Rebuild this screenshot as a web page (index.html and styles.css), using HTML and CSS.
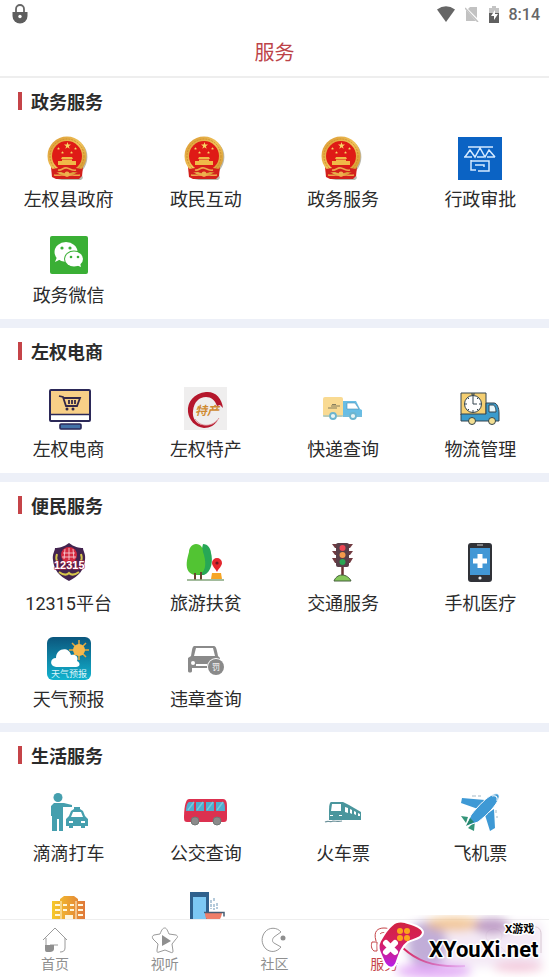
FILE: index.html
```html
<!DOCTYPE html>
<html lang="zh-CN">
<head>
    <meta charset="UTF-8">
    <meta name="viewport" content="width=device-width, initial-scale=1.0">
    <title>服务</title>
    <link rel="stylesheet" href="styles.css">
</head>
<body>
    <svg class="defs" width="0" height="0">
        <defs>
            <linearGradient id="gold" x1="0" y1="0" x2="1" y2="1">
                <stop offset="0" stop-color="#d9962f"/><stop offset=".5" stop-color="#f0c35a"/><stop offset="1" stop-color="#cf8f27"/>
            </linearGradient>
            <linearGradient id="sky" x1="0" y1="0" x2="0" y2="1">
                <stop offset="0" stop-color="#0b567d"/><stop offset="1" stop-color="#12b3cf"/>
            </linearGradient>
            <linearGradient id="hotel" x1="0" y1="0" x2="1" y2="0">
                <stop offset="0" stop-color="#f6c92c"/><stop offset="1" stop-color="#e0793a"/>
            </linearGradient>
            <linearGradient id="pad" x1="0" y1="0" x2="0" y2="1">
                <stop offset="0" stop-color="#cf2340"/><stop offset=".45" stop-color="#d81f5c"/><stop offset="1" stop-color="#b61ff0"/>
            </linearGradient>
            <linearGradient id="cord" x1="0" y1="0" x2="1" y2="0">
                <stop offset="0" stop-color="#d82258"/><stop offset="1" stop-color="#d66be0" stop-opacity=".3"/>
            </linearGradient>
            <filter id="soft" x="-30%" y="-60%" width="160%" height="220%"><feGaussianBlur stdDeviation="5"/></filter>
        </defs>
        <symbol id="star" viewBox="0 0 10 10"><path d="M5 0l1.2 3.7H10L6.9 6l1.2 3.8L5 7.5 1.9 9.8 3.1 6 0 3.7h3.8z"/></symbol>
        <symbol id="emblem" viewBox="0 0 44 44">
            <path d="M26 3c11 3 16 12 14 22-1 5-4 9-6 11l2 6-2 2H10l24-5z" fill="#8d8a78" opacity=".6"/>
            <path d="M4 31h32l-1 9-3 3H9l-4-2z" fill="#d3201c"/>
            <circle cx="20" cy="20" r="19.500" fill="url(#gold)"/>
            <circle cx="20" cy="20" r="17" fill="none" stroke="#c68424" stroke-width=".7" stroke-dasharray="2 1"/>
            <circle cx="20" cy="20" r="15" fill="#df1a16"/>
            <g fill="#f8d564">
                <use href="#star" x="17" y="6" width="7" height="7"/>
                <use href="#star" x="10" y="11" width="3" height="3"/>
                <use href="#star" x="14" y="15" width="3" height="3"/>
                <use href="#star" x="23" y="15" width="3" height="3"/>
                <use href="#star" x="27" y="11" width="3" height="3"/>
            </g>
            <path d="M15 21h10l1 2H14zM15 23.500h10V25h4v4H11v-4h4z" fill="#f0b948"/>
            <path d="M5 33l6-1c3 0 5-3 9-3s6 3 9 3l6 1-1 4-8-1-6 2-6-2-8 1z" fill="#d3201c"/>
            <path d="M11 34c4 1 5-3 9-2s5 3 9 2M7 39c4 1 9-1 13 1 4-2 9 0 13-1" fill="none" stroke="#efa84a" stroke-width="1.500"/>
            <circle cx="20" cy="38" r="2.500" fill="#efb04e"/>
        </symbol>
    </svg>

    <div class="app">
        <div class="status">
            <svg class="status-lock" width="16" height="20" viewBox="0 0 16 20">
                <path d="M4 9V5a4 4 0 0 1 8 0v4" fill="none" stroke="#666" stroke-width="1.800"/>
                <path d="M.5 8h15v4a7.500 7.500 0 0 1-15 0z" fill="#5e5e5e"/>
                <circle cx="8" cy="12.500" r="1.700" fill="#fff"/>
            </svg>
            <svg width="18" height="16" viewBox="0 0 18 16"><path d="M0 3.500Q9-3 18 3.500L9 16z" fill="#666"/></svg>
            <svg width="14" height="16" viewBox="0 0 14 16">
                <path d="M5 1h7v11L3 3zM1 4l10 11H1z" fill="#c2c2c2"/><path d="M0 2l13 14" stroke="#c2c2c2" stroke-width="1.500"/>
            </svg>
            <svg width="10" height="17" viewBox="0 0 10 17">
                <path d="M3 0h4v2h3v6H0V2h3z" fill="#c4c4c4"/><path d="M0 7h10v10H0z" fill="#606060"/><path d="M6 4L2 10h3v4l4-6H6z" fill="#fff"/>
            </svg>
            <span>8:14</span>
        </div>
        <header class="title"><h1>服务</h1></header>

        <main class="content">
            <section class="group">
                <h2>政务服务</h2>
                <div class="grid">
                    <a class="item" href="#"><svg class="icon"><use href="#emblem"/></svg>左权县政府</a>
                    <a class="item" href="#"><svg class="icon"><use href="#emblem"/></svg>政民互动</a>
                    <a class="item" href="#"><svg class="icon"><use href="#emblem"/></svg>政务服务</a>
                    <a class="item" href="#">
                        <svg class="icon" viewBox="0 0 44 44">
                            <path d="M0 1h44v43H0z" fill="#0b63c4"/>
                            <path d="M10 11h25M7 21l5-7 5 7 5-9 5 9 4-7 6 7M6 21h8M19 21h7M29 21h8M13 25h18v10H20M13 24v10h5M17 29h9v2" fill="none" stroke="#d5eaff" stroke-width="1.500"/>
                        </svg>行政审批</a>
                    <a class="item" href="#">
                        <svg class="icon" viewBox="0 0 44 44">
                            <rect x="3" y="4" width="38" height="38" rx="2" fill="#3aaf35"/>
                            <path d="M10 25l-2 5 6-3z" fill="#fff"/><ellipse cx="19" cy="20" rx="11.500" ry="10" fill="#fff"/>
                            <ellipse cx="27" cy="27" rx="10" ry="8.500" fill="#3aaf35"/>
                            <ellipse cx="27" cy="27" rx="9" ry="7.500" fill="#fff"/><path d="M29 33l5 2-1-4z" fill="#fff"/>
                            <g fill="#3aaf35"><circle cx="15" cy="16" r="1.600"/><circle cx="23" cy="16" r="1.600"/><circle cx="24" cy="25" r="1.300"/><circle cx="31" cy="25" r="1.300"/></g>
                        </svg>政务微信</a>
                </div>
            </section>

            <section class="group">
                <h2>左权电商</h2>
                <div class="grid">
                    <a class="item" href="#">
                        <svg class="icon" viewBox="0 0 44 44">
                            <rect x="3" y="4" width="40" height="31" rx="1" fill="#fff" stroke="#2b2858" stroke-width="2"/>
                            <path d="M4 5h38v23H4z" fill="#f8cf87"/><path d="M3 28.500h40" stroke="#2b2858" stroke-width="1.500"/>
                            <rect x="13" y="38" width="21" height="5" rx="1" fill="#4472a8" stroke="#2b2858" stroke-width="1.600"/>
                            <path d="M12 10l4 1 3 9h11l3-8H17M22 14v4M25 14v4M28 14v4" fill="none" stroke="#342748" stroke-width="1.800"/>
                            <circle cx="20" cy="23" r="1.500" fill="#342748"/><circle cx="26" cy="23" r="1.500" fill="#342748"/>
                        </svg>左权电商</a>
                    <a class="item" href="#">
                        <svg class="icon" viewBox="0 0 44 44">
                            <path d="M0 1h43v43H0z" fill="#efeeee"/>
                            <path d="M39 22C38 12 31 5 22 6 10 7 3 16 4 26c1 8 7 15 16 16 6 0 11-3 14-8-5 5-10 6-15 5-7-1-11-7-10-14C10 16 15 11 22 11c5 0 9 3 11 9l3-1z" fill="#b5172c"/>
                            <path d="M11 33c6 9 18 8 24-1" fill="none" stroke="#d77780" stroke-width=".8"/>
                            <text x="11" y="29" class="t-gold">特产</text>
                        </svg>左权特产</a>
                    <a class="item" href="#">
                        <svg class="icon" viewBox="0 0 44 44">
                            <rect x="2" y="11" width="20" height="20" rx="2" fill="#f9da92"/>
                            <path d="M22 15h13l4 8 2 1v7H22z" fill="#68bde4"/><path d="M26 17h8l4 6H26z" fill="#fff" stroke="#4c91b5" stroke-width=".6"/>
                            <path d="M10 20h9M7 22h9M11 18.500h4" stroke="#68664f" stroke-width=".8"/><path d="M2 30h39" stroke="#80bcd5"/>
                            <g fill="#e9f4f4" stroke="#6db5cf" stroke-width="1.800"><circle cx="12" cy="30" r="3"/><circle cx="32" cy="30" r="3"/></g>
                        </svg>快递查询</a>
                    <a class="item" href="#">
                        <svg class="icon" viewBox="0 0 44 44">
                            <g stroke="#34454e" stroke-width="1">
                                <path d="M3 7h25v22H3z" fill="#f5cf72"/><path d="M3 28h25V17h8c3 0 5 5 5 10v8H3z" fill="#3b9bcc"/>
                                <path d="M31 19h4c2 0 3 4 3 7h-7z" fill="#e8f7fb"/>
                                <circle cx="15" cy="18" r="8.500" fill="#fff"/>
                                <path d="M13 8h4M15 8v2M15 18v-6M15 18h4M15 10v2M15 24v2M7 18h2M21 18h2M10 12l1 1M20 12l-1 1M10 24l1-1M20 24l-1-1"/>
                                <g fill="#f3df92"><circle cx="14" cy="35" r="3.500"/><circle cx="34" cy="35" r="3.500"/></g>
                            </g>
                        </svg>物流管理</a>
                </div>
            </section>

            <section class="group">
                <h2>便民服务</h2>
                <div class="grid">
                    <a class="item" href="#">
                        <svg class="icon" viewBox="0 0 44 44">
                            <path d="M22 3c5 4 10 5 14 5 0 3 3 6 2 12-1 10-6 16-16 21C12 36 7 30 6 20c-1-6 2-9 2-12 4 0 9-1 14-5z" fill="#43244f"/>
                            <circle cx="22" cy="15" r="8" fill="#d5293f"/><path d="M16 13h12M15 17h14M22 8v12M18 9l-1 10M26 9l1 10" stroke="#f7dce0" stroke-width=".8"/>
                            <path d="M10 14c-1 3-1 5 0 7M34 14c1 3 1 5 0 7M12 32c4 3 7 4 10 1 3 3 6 2 10-1" fill="none" stroke="#d5c64c" stroke-width="2"/>
                            <text x="7" y="29" class="t-code">12315</text>
                        </svg>12315平台</a>
                    <a class="item" href="#">
                        <svg class="icon" viewBox="0 0 44 44">
                            <path d="M19 4c5 0 8 5 8 9 2 7 1 19-7 22h-8z" fill="#27a756"/>
                            <path d="M12 4c5 0 7 4 7 8 3 8 4 19-3 22-4 2-8 1-11-2-4-5-2-13 0-20 0-4 3-8 7-8z" fill="#52c433"/>
                            <path d="M11 33v7M17 32v8" stroke="#69442e" stroke-width="2"/><path d="M3 40h37" stroke="#83a57b" stroke-width="1.500"/>
                            <path d="M33 32c-2-4-5-6-5-9a5 5 0 0 1 10 0c0 3-3 5-5 9z" fill="#e3272d"/><circle cx="33" cy="23" r="1.600" fill="#6f1822"/>
                            <path d="M28 33h9l1 6H27z" fill="#f6a526"/>
                        </svg>旅游扶贫</a>
                    <a class="item" href="#">
                        <svg class="icon" viewBox="0 0 44 44">
                            <path d="M11 4h21l-3 4H14zM11 11h21l-3 4H14zM11 18h21l-3 5H14z" fill="#713b41"/>
                            <rect x="15" y="3" width="13" height="24" rx="2" fill="#593f49"/><path d="M21.500 27v10" stroke="#6a3030" stroke-width="2.500"/>
                            <circle cx="21.500" cy="8" r="3" fill="#ee4654"/><circle cx="21.500" cy="15" r="3" fill="#f39a4c"/><circle cx="21.500" cy="22" r="3" fill="#29a653"/>
                            <path d="M13 41c1-3 4-6 8-6s8 3 9 6z" fill="#84c75a" stroke="#47613c"/>
                        </svg>交通服务</a>
                    <a class="item" href="#">
                        <svg class="icon" viewBox="0 0 44 44">
                            <rect x="10" y="3" width="24" height="39" rx="3" fill="#303238"/><path d="M12 8h20v27H12z" fill="#4297d5"/>
                            <path d="M19 5h6" stroke="#ccc"/><circle cx="22" cy="38" r="1.600" fill="#eee"/><path d="M19.500 14h5v4.500H29v5h-4.500V28h-5v-4.500H15v-5h4.500z" fill="#fff"/>
                        </svg>手机医疗</a>
                    <a class="item" href="#">
                        <svg class="icon" viewBox="0 0 44 44">
                            <rect y="1" width="44" height="43" rx="6" fill="url(#sky)"/>
                            <path d="M32 4v20M22 14h20M25 7l14 14M39 7L25 21" stroke="#e8a83c" stroke-width="1.500"/><circle cx="32" cy="14" r="6" fill="#f5b84c"/>
                            <path d="M9 31c-7-1-6-9 0-9 0-10 13-12 15-3 7-1 7 4 6 6 4 2 3 6-1 6z" fill="#fff"/>
                            <text x="4" y="41" class="t-sky">天气预报</text>
                        </svg>天气预报</a>
                    <a class="item" href="#">
                        <svg class="icon" viewBox="0 0 44 44">
                            <path d="M10 10h20c2 0 3 4 4 10l2 2v10H8v3c0 2-4 2-4 0V22l3-2c1-5 1-9 3-10z" fill="#8a8a8a"/>
                            <path d="M12 12h17l2 8H10z" fill="#fff"/><circle cx="9" cy="27" r="2" fill="#fff"/><path d="M12 29h11" stroke="#fff" stroke-width="2"/>
                            <circle cx="32" cy="31" r="9" fill="#fff"/><circle cx="32" cy="31" r="8" fill="#8a8a8a"/>
                            <text x="28" y="34" class="t-fine">罚</text>
                        </svg>违章查询</a>
                </div>
            </section>

            <section class="group">
                <h2>生活服务</h2>
                <div class="grid">
                    <a class="item" href="#">
                        <svg class="icon" viewBox="0 0 44 44">
                            <g fill="#459fae">
                                <circle cx="11" cy="7.500" r="4.500"/><path d="M7 13h10l8 2v2h-9v24h-4V29h-2v12H5V26H4V16z"/>
                                <path d="M27 17h6v2l3 2 2 5 3 3v7h-3v2h-4v-2h-8v2h-4v-2h-3v-7l3-3 2-5 3-2z"/>
                            </g>
                            <path d="M26 22h8l2 5H24zM22 31h4v2h-4zM34 31h4v2h-4z" fill="#fff"/>
                        </svg>滴滴打车</a>
                    <a class="item" href="#">
                        <svg class="icon" viewBox="0 0 44 44">
                            <path d="M5 9h34c3 0 4 3 4 7v12c0 3-1 4-3 4H3c-2 0-3-1-3-4 0-8 1-19 5-19z" fill="#dc3150"/>
                            <path d="M5 12h5v9H2c0-4 1-8 3-9zM12 12h8v9h-8zM22 12h8v9h-8zM32 12h7c2 1 2 5 2 9h-9z" fill="#4faed0"/>
                            <path d="M4 20l6-8M13 20l6-8M23 20l6-8M33 20l6-8" stroke="#79c9dd" stroke-width="1.500"/>
                            <g fill="#8b8b8b" stroke="#6f7775"><circle cx="11" cy="31" r="4"/><circle cx="33" cy="31" r="4"/></g>
                        </svg>公交查询</a>
                    <a class="item" href="#">
                        <svg class="icon" viewBox="0 0 44 44">
                            <path d="M10 12h12l6 3 12 7v8H8v-6c0-6 0-11 2-12z" fill="#4a969d"/>
                            <path d="M11 14h9v7H10zM24 17l3 1v5l-3-1zM29 19l2 1v4l-2-1zM33 21l2 1v3l-2-1zM37 23l2 1v2h-2zM9 25h3v1H9zM18 25h3v1h-3z" fill="#fff"/>
                            <path d="M4 32c4-2 5 1 8-1 3 0 5 1 9 0" fill="none" stroke="#6d929b" stroke-width="1.200"/>
                        </svg>火车票</a>
                    <a class="item" href="#">
                        <svg class="icon" viewBox="0 0 44 44">
                            <path d="M4 8l23 2-7 9L3 13zM36 19l1 19-5 3-5-16z" fill="#3e99d5"/>
                            <path d="M3 26l7 1-2 6zM17 31l-1 10-6-3z" fill="#359579"/>
                            <path d="M8 36l5-11C21 15 29 7 34 5c4-2 8-2 7 3-3 8-11 16-21 24z" fill="#3e99d5" stroke="#fff"/>
                            <path d="M8 36l4-8 4 4z" fill="#25866c"/><path d="M34 6c4-1 6 1 5 5" fill="none" stroke="#fff" stroke-width="1.200"/>
                            <path d="M14 6h4M20 6h3M38 20v3M39 26v2" stroke="#a4b9c6"/>
                        </svg>飞机票</a>
                    <a class="item" href="#">
                        <svg class="icon" viewBox="0 0 44 44">
                            <path d="M5 15h8v-2l4-3h10l4 3v2h7v29H5z" fill="url(#hotel)"/>
                            <path d="M8 18h5v2H8zM8 23h5v2H8zM8 28h5v2H8zM16 18h4v2h-4zM23 18h4v2h-4zM16 23h4v2h-4zM23 23h4v2h-4zM31 18h5v2h-5zM31 23h5v2h-5zM31 28h5v2h-5zM18 29h8v15h-8z" fill="#fff6db"/>
                            <path d="M14 15v29M29 15v29" stroke="#fff6db"/>
                        </svg></a>
                    <a class="item" href="#">
                        <svg class="icon" viewBox="0 0 44 44">
                            <path d="M6 6h19v38H6z" fill="#2f618d"/><path d="M9 11h13v33H9z" fill="#7cc8f3"/>
                            <path d="M27 14v9M30 12v3M30 18v6M33 17v6" stroke="#6c96b7" stroke-dasharray="3 1"/>
                            <path d="M21 27h17c-1 7-4 9-9 9s-8-3-8-9z" fill="#ef7e68"/><path d="M20 26.500h20v4" fill="none" stroke="#475c72" stroke-width="1.500"/>
                        </svg></a>
                </div>
            </section>
        </main>

        <nav class="tabs">
            <a class="tab" href="#">
                <svg viewBox="0 0 28 28"><path d="M2 14L14 2l12 12M5 12v12M24 12v10c0 3-2 4-5 4M9 19h8" fill="none"/><path d="M4 19h9v4c0 2-2 3-4 3H6c-2 0-2-2-2-3z" fill="#8f8f8f" stroke="none"/></svg>
                首页</a>
            <a class="tab" href="#">
                <svg viewBox="0 0 28 28"><path d="M14 2c1 0 2 1 4 6l7 1c2 1 2 2 0 4l-4 5 1 7c0 2-1 2-3 1l-5-2-6 2c-2 1-2 0-2-2l1-6-5-5c-1-2-1-3 1-4l6-1c2-5 3-6 5-6z" fill="none"/><path d="M11 9l9 6-9 5z" fill="#8f8f8f" stroke="none"/></svg>
                视听</a>
            <a class="tab" href="#">
                <svg viewBox="0 0 28 28"><path d="M21 6C17 1 9 1 5 6s-4 12 1 17c5 4 11 3 15-2l-7-4c-2-1-2-4 0-6z" fill="none"/><circle cx="23" cy="12" r="2.500" fill="#8f8f8f" stroke="none"/></svg>
                社区</a>
            <a class="tab tab-on" href="#">
                <svg viewBox="0 0 28 28"><path d="M6 15C3 5 8 2 14 2s11 3 8 13M2 16h5v9H4c-3-2-3-6-2-9M10 8c2-2 5-2 8 0" fill="none"/></svg>
                服务</a>
            <a class="tab" href="#">
                <svg viewBox="0 0 28 28"><path d="M14 3c5 0 8 3 8 7s-3 6-8 6-8-2-8-6 3-7 8-7zM3 26c3-9 19-9 22 0" fill="none"/></svg>
            </a>
        </nav>

        <svg class="mark" width="177" height="62" viewBox="0 0 177 62">
            <g filter="url(#soft)">
                <path d="M34 8h136v44H44z" fill="#f3e8f5" opacity=".9"/>
                <ellipse cx="55" cy="30" rx="20" ry="24" fill="#ad94cc" opacity=".7"/>
                <ellipse cx="82" cy="9" rx="28" ry="7" fill="#f0bb7e" opacity=".8"/>
                <ellipse cx="120" cy="11" rx="18" ry="8" fill="#a87bb2" opacity=".7"/>
                <ellipse cx="62" cy="56" rx="38" ry="8" fill="#dfa0f5" opacity=".8"/>
                <ellipse cx="146" cy="52" rx="25" ry="5" fill="#f1b4cc" opacity=".7"/>
            </g>
            <path d="M31 33c12 11 28 20 62 18" fill="none" stroke="url(#cord)" stroke-width="2"/>
            <path d="M160 12c6-1 9 2 9 7v19" fill="none" stroke="#d8c8d2"/>
            <path d="M20 10c3-3 8-4 13-3 9 3 17 5 18 10 0 6-8 7-15 10-7 5-9 14-12 22-3 6-9 4-12-2C9 39 4 33 8 26c4-7 7-12 12-16z" fill="url(#pad)" stroke="#fff" stroke-width="2"/>
            <g fill="#fba51b"><circle cx="28" cy="16" r="3"/><circle cx="35" cy="16" r="3"/><circle cx="28" cy="23" r="3"/><circle cx="35" cy="23" r="3"/></g>
            <path d="M14 28l9 9M23 28l-9 9" stroke="#fff" stroke-width="6" stroke-linecap="round"/>
            <text x="133" y="18" class="mark-small">X游戏</text>
            <text x="57" y="42" class="mark-name">XYouXi.net</text>
        </svg>
    </div>
</body>
</html>
```
FILE: styles.css
```css
* {
    box-sizing: border-box;
}
body {
    margin: 0;
    background: #fff;
    color: #2b2b2b;
    font-family: Roboto, "Noto Sans CJK SC", sans-serif;
    font-size: 18px;
}
a {
    color: inherit;
    text-decoration: none;
}
.defs {
    position: absolute;
}
.app {
    position: relative;
    display: flex;
    flex-direction: column;
    height: 100vh;
    overflow: hidden;
}

/* status bar */
.status {
    display: flex;
    align-items: center;
    gap: 10px;
    height: 28px;
    padding: 0 9px 0 12px;
    flex: none;
    color: #666;
    font-size: 16px;
    font-weight: 500;
}
.status-lock {
    margin-right: auto;
}
.title {
    flex: none;
    height: 50px;
    padding-top: 2px;
    border-bottom: 2px solid #eee;
    text-align: center;
}
.title h1 {
    margin: 0;
    color: #bc4348;
    font-size: 20px;
    font-weight: 400;
    line-height: 46px;
}

/* service groups */
.content {
    flex: 1;
    min-height: 0;
    overflow-y: auto;
    scrollbar-width: none;
}
.group + .group {
    border-top: 9px solid #edf0f8;
}
.group h2 {
    display: flex;
    align-items: center;
    gap: 9px;
    height: 49px;
    margin: 0;
    padding: 0 18px 4px;
    font-size: 18px;
    font-weight: 700;
}
.group h2::before {
    content: "";
    width: 4px;
    height: 18px;
    background: #c54448;
}
.grid {
    display: grid;
    grid-template-columns: repeat(4, 1fr);
    grid-auto-rows: 96px;
}
.item {
    display: flex;
    flex-direction: column;
    align-items: center;
    gap: 8px;
    padding-top: 9px;
    line-height: 24px;
}
.icon {
    flex: none;
    width: 44px;
    height: 44px;
}
.t-gold {
    fill: #cf8b31;
    font: italic 700 12px "Noto Sans CJK SC", sans-serif;
}
.t-code {
    fill: #fff;
    stroke: #a82145;
    stroke-width: 1px;
    paint-order: stroke;
    font: 700 11px "Liberation Sans", sans-serif;
}
.t-sky {
    fill: #d9f6fb;
    font-size: 9px;
}
.t-fine {
    fill: #fff;
    font-size: 8px;
}

/* bottom tabs */
.tabs {
    display: flex;
    flex: none;
    height: 58px;
    border-top: 1px solid #eee;
    background: #fff;
}
.tab {
    display: flex;
    flex: 1;
    flex-direction: column;
    align-items: center;
    gap: 1px;
    padding-top: 6px;
    color: #8f8f8f;
    font-size: 14px;
    line-height: 18px;
}
.tab svg {
    width: 28px;
    height: 28px;
    stroke: #9a9a9a;
    stroke-width: 1px;
}
.tab-on {
    color: #c54448;
}
.tab-on svg {
    stroke: #c54448;
}

/* site mark over the tab bar */
.mark {
    position: absolute;
    right: 0;
    bottom: 0;
    pointer-events: none;
}
.mark text {
    fill: #000;
    stroke: #fff;
    stroke-width: 3px;
    stroke-linejoin: round;
    paint-order: stroke;
}
.mark-small {
    font: 700 11px "Noto Sans", "Noto Sans CJK SC", sans-serif;
}
.mark-name {
    font: 700 22px Roboto, sans-serif;
}
```
